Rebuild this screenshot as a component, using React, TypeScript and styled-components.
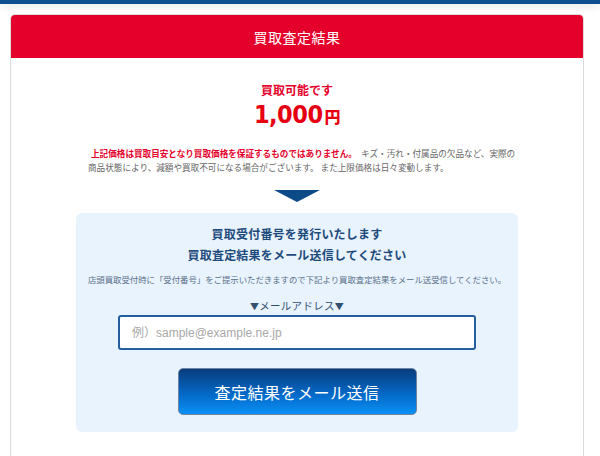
import styled, { createGlobalStyle } from "styled-components";

const GlobalStyle = createGlobalStyle`
  body {
    margin: 0;
    background: #ffffff;
    font-family: "Noto Sans CJK JP", "Noto Sans", sans-serif;
  }
`;

const TopBar = styled.div`
  height: 4px;
  background: #0e4f92;
  box-shadow: 0 2px 8px rgba(0, 0, 0, 0.14);
`;

const Page = styled.div`
  padding: 10px 16px 0 10px;
`;

const Card = styled.section`
  border: 1px solid #dcdcdc;
  border-bottom: none;
  border-radius: 5px 5px 0 0;
  overflow: hidden;
  height: 450px;
`;

const CardHeader = styled.h2`
  margin: 0;
  height: 43px;
  display: flex;
  align-items: center;
  justify-content: center;
  background: #e4002b;
  color: #ffffff;
  font-size: 14px;
  font-weight: 400;
  letter-spacing: 0.5px;
`;

const CardBody = styled.div`
  display: flex;
  flex-direction: column;
  align-items: center;
  padding-top: 24px;
`;

const Lead = styled.p`
  margin: 0;
  color: #e4002b;
  font-size: 12px;
  font-weight: 700;
  line-height: 16px;
`;

const Price = styled.p`
  margin: 2px 0 0;
  color: #e60012;
  font-family: "DejaVu Sans Condensed", "DejaVu Sans", sans-serif;
  font-stretch: condensed;
  font-weight: 700;
  font-size: 25px;
  line-height: 30px;
  letter-spacing: -0.5px;
`;

const Yen = styled.span`
  font-family: "Noto Sans CJK JP", sans-serif;
  font-size: 16px;
  font-weight: 900;
  margin-left: 2px;
`;

const Notice = styled.p`
  margin: 15px 0 0;
  align-self: flex-start;
  padding-left: 77px;
  color: #666666;
  font-size: 8.6px;
  line-height: 14px;
  white-space: nowrap;
`;

const Warn = styled.strong`
  color: #e4002b;
  font-weight: 700;
  margin-left: 3px;
  margin-right: 4px;
`;

const Arrow = styled.div`
  margin-top: 16px;
  width: 0;
  height: 0;
  border-left: 23px solid transparent;
  border-right: 23px solid transparent;
  border-top: 12px solid #0d4a88;
`;

const Panel = styled.div`
  align-self: stretch;
  margin: 11px 65px 0;
  padding: 10px 0 17px;
  background: #e8f3fe;
  border-radius: 6px;
  display: flex;
  flex-direction: column;
  align-items: center;
`;

const Headline = styled.h3`
  margin: 0;
  color: #1e4b7c;
  font-size: 12px;
  font-weight: 700;
  line-height: 21px;
  text-align: center;
  letter-spacing: 0.2px;
`;

const Hint = styled.p`
  margin: 7px 0 0;
  color: #5b6f89;
  font-size: 8.4px;
  line-height: 14px;
  white-space: nowrap;
`;

const FieldLabel = styled.label`
  margin-top: 13px;
  color: #34506f;
  font-size: 10.5px;
  line-height: 14px;
  letter-spacing: 0.3px;
`;

const Mark = styled.span`
  font-size: 9px;
`;

const EmailInput = styled.input`
  box-sizing: border-box;
  margin-top: 1px;
  width: 358px;
  height: 35px;
  padding: 0 12px;
  border: 2px solid #235f9e;
  border-radius: 3px;
  background: #ffffff;
  font-family: "Liberation Sans", "Noto Sans CJK JP", sans-serif;
  font-size: 12px;
  outline: none;

  &::placeholder {
    color: #a8a8a8;
  }
`;

const SendButton = styled.button`
  box-sizing: border-box;
  margin-top: 18px;
  width: 239px;
  height: 47px;
  border: 1px solid #6f84a0;
  border-radius: 5px;
  background: linear-gradient(to bottom, #093c7c 0%, #0468c6 55%, #0a90f5 100%);
  color: #ffffff;
  font-family: "Noto Sans CJK JP", sans-serif;
  font-size: 16px;
  letter-spacing: 0.5px;
  cursor: pointer;
`;

export default function App() {
  return (
    <>
      <GlobalStyle />
      <TopBar />
      <Page>
        <Card>
          <CardHeader>買取査定結果</CardHeader>
          <CardBody>
            <Lead>買取可能です</Lead>
            <Price>
              1,000<Yen>円</Yen>
            </Price>
            <Notice>
              <Warn>上記価格は買取目安となり買取価格を保証するものではありません。</Warn>
              キズ・汚れ・付属品の欠品など、実際の
              <br />
              商品状態により、減額や買取不可になる場合がございます。 また上限価格は日々変動します。
            </Notice>
            <Arrow />
            <Panel>
              <Headline>
                買取受付番号を発行いたします
                <br />
                買取査定結果をメール送信してください
              </Headline>
              <Hint>
                店頭買取受付時に「受付番号」をご提示いただきますので下記より買取査定結果をメール送受信してください。
              </Hint>
              <FieldLabel htmlFor="mail">
                <Mark>▼</Mark>メールアドレス<Mark>▼</Mark>
              </FieldLabel>
              <EmailInput id="mail" type="email" placeholder="例）sample@example.ne.jp" />
              <SendButton type="button">査定結果をメール送信</SendButton>
            </Panel>
          </CardBody>
        </Card>
      </Page>
    </>
  );
}
